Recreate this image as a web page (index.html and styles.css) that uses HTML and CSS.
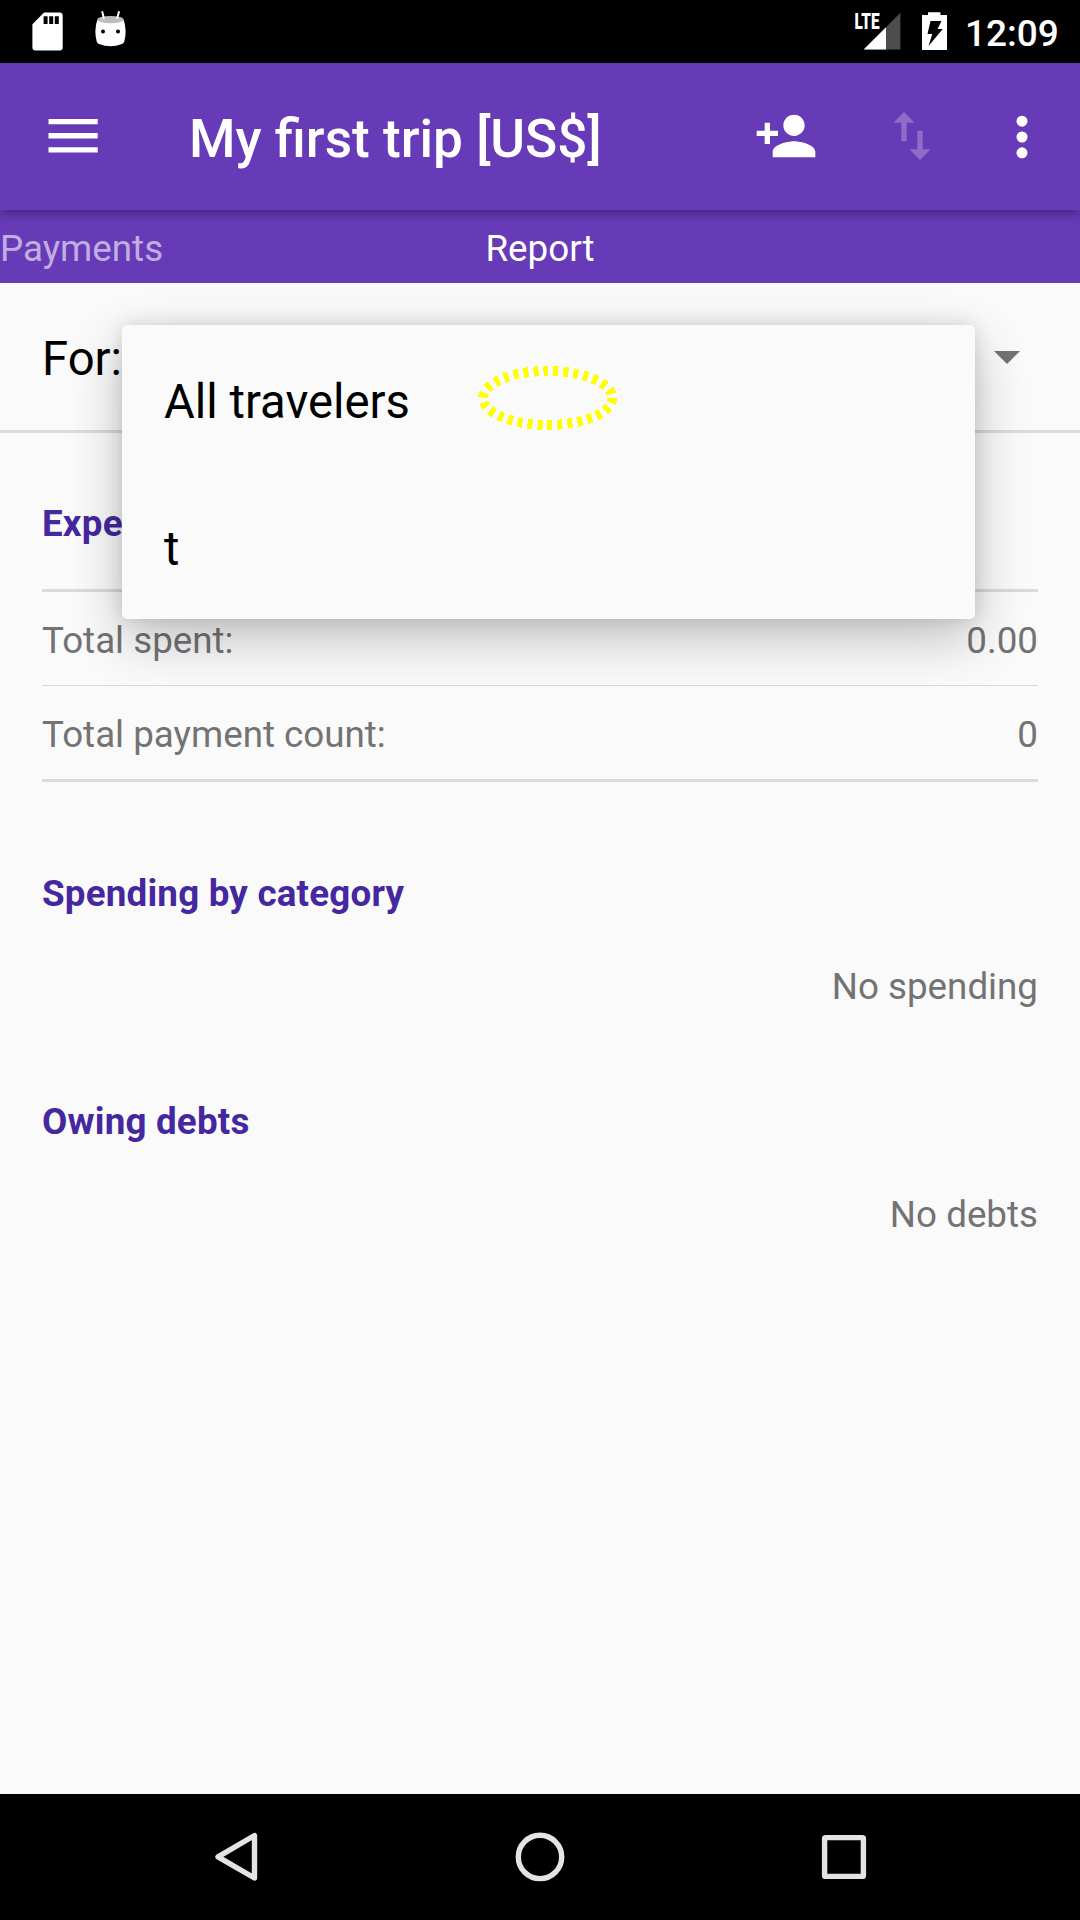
FILE: index.html
```html
<!DOCTYPE html>
<html lang="en">
<head>
<meta charset="utf-8">
<title>My first trip</title>
<link rel="stylesheet" href="styles.css">
</head>
<body>
<div class="screen">
  <div class="status-bar">
    <svg class="status-left" width="140" height="63" viewBox="0 0 140 63">
      <path fill="#fff" fill-rule="evenodd" d="M44 12.600H59.500a3.200 3.200 0 0 1 3.200 3.200V47.200a3.200 3.200 0 0 1-3.200 3.200H35.600a3.200 3.200 0 0 1-3.200-3.200V24.200ZM43.600 16.300V24H47.600V16.300ZM49.200 16.300V24H53.200V16.300ZM54.800 16.300V24H58.800V16.300Z"/>
      <path fill="#fff" d="M97.200 20Q110 26 123.800 20Q127.200 31 124.300 41.500Q123.800 43.400 122 44Q110.500 48.600 99 44Q97.200 43.400 96.700 41.500Q93.800 31 97.200 20Z"/>
      <ellipse cx="110.500" cy="19.600" rx="13.200" ry="3.600" fill="#bdbdbd"/>
      <path d="M102.300 12L103.800 18M118.900 12L117.300 18" stroke="#fff" stroke-width="2" stroke-linecap="round"/>
      <circle cx="103" cy="31.500" r="2"/><circle cx="118" cy="31.500" r="2"/>
    </svg>
    <div class="status-right">
      <svg width="100" height="63" viewBox="850 0 100 63">
        <path fill="#4d4d4d" d="M900.400 12.800V49.500H863.700Z"/>
        <path fill="#fff" d="M886 27.200V49.500H863.700Z"/>
        <text class="lte" x="854.500" y="29" textLength="25" lengthAdjust="spacingAndGlyphs">LTE</text>
        <path fill="#fff" d="M928 12.300H940.500V15H947V50H922V15H928Z"/>
        <path fill="#000" d="M930.500 21H941.500L937.500 29H942.800L928.500 46L932.300 34H927.500Z"/>
      </svg>
      <span class="clock">12:09</span>
    </div>
  </div>

  <header class="app-bar">
    <svg class="menu" width="50" height="36" viewBox="0 0 50 36"><path fill="#fff" d="M.5 .9H49.700V6.200H.5ZM.5 15.100H49.700V20.400H.5ZM.5 29.300H49.700V34.600H.5Z"/></svg>
    <h1 class="title">My first trip [US$]</h1>
    <svg class="add" width="64" height="64" viewBox="0 0 24 24"><path fill="#fff" d="M15 12c2.210 0 4-1.790 4-4s-1.790-4-4-4-4 1.790-4 4 1.790 4 4 4zm-9-2V7H4v3H1v2h3v3h2v-3h3v-2H6zm9 4c-2.670 0-8 1.340-8 4v2h16v-2c0-2.660-5.330-4-8-4z"/></svg>
    <svg class="swap" width="64" height="64" viewBox="0 0 24 24"><path fill="#fff" d="M16 17.010V10h-2v7.010h-3L15 21l4-3.990h-3zM9 3L5 6.990h3V14h2V6.990h3L9 3z"/></svg>
    <svg class="more" width="12" height="44" viewBox="0 0 12 44"><g fill="#fff"><circle cx="6" cy="6.200" r="5.500"/><circle cx="6" cy="22" r="5.500"/><circle cx="6" cy="37.800" r="5.500"/></g></svg>
  </header>

  <nav class="tabs">
    <span class="tab">Payments</span>
    <span class="tab current">Report</span>
  </nav>

  <main class="content">
    <div class="filter">
      <span>For:</span>
      <svg class="caret" width="26" height="13" viewBox="0 0 26 13"><path fill="#737373" d="M0 0H26L13 13Z"/></svg>
      <div class="popup">
        <div class="option">All travelers</div>
        <div class="option">t</div>
        <svg class="marker" width="144" height="70" viewBox="0 0 144 70"><ellipse cx="71.700" cy="35" rx="64.500" ry="27" fill="none" stroke="#ff0" stroke-width="10" stroke-dasharray="5 5"/></svg>
      </div>
    </div>
    <div class="report">
      <h2 class="heading">Expe</h2>
      <div class="table">
        <div class="row"><span>Total spent:</span><span>0.00</span></div>
        <div class="row"><span>Total payment count:</span><span>0</span></div>
      </div>
      <h2 class="heading">Spending by category</h2>
      <p class="empty">No spending</p>
      <h2 class="heading">Owing debts</h2>
      <p class="empty">No debts</p>
    </div>
  </main>

  <footer class="nav-bar">
    <svg width="46" height="54" viewBox="213 1830 46 54"><path d="M254.500 1835.500V1878L218 1856.800Z"/></svg>
    <svg width="54" height="54" viewBox="513 1830 54 54"><circle cx="540" cy="1856.900" r="21.700"/></svg>
    <svg width="48" height="54" viewBox="820 1830 48 54"><rect x="824.600" y="1837.600" width="38.800" height="38.800" rx="1"/></svg>
  </footer>
</div>
</body>
</html>
```

FILE: styles.css
```css
* { box-sizing: border-box; }
body { margin: 0; background: #fafafa; font-family: Roboto, sans-serif; }
h1, h2, p { margin: 0; }
svg { display: block; flex: none; }

.screen {
  width: 1080px;
  height: 1920px;
  display: flex;
  flex-direction: column;
  overflow: hidden;
}

.status-bar {
  height: 63px;
  flex: none;
  background: #000;
  color: #fff;
  display: flex;
  justify-content: space-between;
}
.status-right { display: flex; width: 230px; }
.lte { font: 900 22px Roboto, sans-serif; fill: #fff; }
.clock { padding: 4px 0 0 15px; font-size: 37px; font-weight: 500; line-height: 60px; }

.app-bar {
  height: 147px;
  flex: none;
  position: relative;
  z-index: 1;
  display: flex;
  align-items: center;
  background: #673ab7;
  color: #fff;
  box-shadow: 0 4px 10px -1px rgba(0, 0, 0, .38);
}
.menu { margin-left: 48px; margin-top: -1px; }
.title {
  width: 562px;
  margin-left: 91px;
  padding-top: 6px;
  font-size: 53.2px;
  font-weight: 500;
  line-height: 143px;
  white-space: nowrap;
}
.add { margin-left: 2.6px; margin-top: -2px; }
.swap { margin-left: 62px; margin-top: -2px; opacity: .26; }
.more { margin-left: 72.4px; margin-top: 0; }

.tabs {
  height: 73px;
  flex: none;
  display: grid;
  grid-template-columns: 1fr auto 1fr;
  padding-top: 4px;
  background: #673ab7;
  color: #fff;
  font-size: 36.75px;
  line-height: 69px;
}
.tab { color: rgba(255, 255, 255, .6); }
.tab.current { color: #fff; }

.content { flex: 1; }
.filter {
  height: 150px;
  position: relative;
  display: flex;
  align-items: center;
  justify-content: space-between;
  padding: 0 60.5px 0 42px;
  border-bottom: 3px solid #dadada;
  font-size: 47.25px;
  line-height: 56px;
}
.filter > span { padding-top: 4px; }
.caret { margin-top: 2px; }
.popup {
  position: absolute;
  z-index: 2;
  top: 42px;
  left: 122px;
  width: 853px;
  border-radius: 5px;
  background: #fafafa;
  box-shadow: 0 19px 54px rgba(0, 0, 0, .24), 0 0 18px rgba(0, 0, 0, .12);
}
.option { height: 147px; padding: 6px 42px 0; line-height: 143px; }
.marker { position: absolute; left: 354px; top: 38px; shape-rendering: crispEdges; }

.report {
  padding: 67px 42px 0;
  color: #737373;
  font-size: 36.75px;
}
.heading {
  color: #4527a0;
  font-size: 36.75px;
  font-weight: 700;
  line-height: 48px;
  letter-spacing: .2px;
}
.table {
  margin: 41px 0 88px;
  border-top: 3px solid #dadada;
  border-bottom: 3px solid #dadada;
}
.row {
  height: 93px;
  display: flex;
  justify-content: space-between;
  padding-top: 5px;
  line-height: 88px;
}
.row + .row { height: 94px; border-top: 1px solid #dadada; }
.empty { margin: 45px 0 87px; line-height: 48px; text-align: right; }

.nav-bar {
  height: 126px;
  flex: none;
  display: flex;
  align-items: center;
  justify-content: space-between;
  padding: 0 212px 0 213px;
  background: #000;
}
.nav-bar svg { fill: none; stroke: #e4e4e4; stroke-width: 5.4; stroke-linejoin: round; }
```
